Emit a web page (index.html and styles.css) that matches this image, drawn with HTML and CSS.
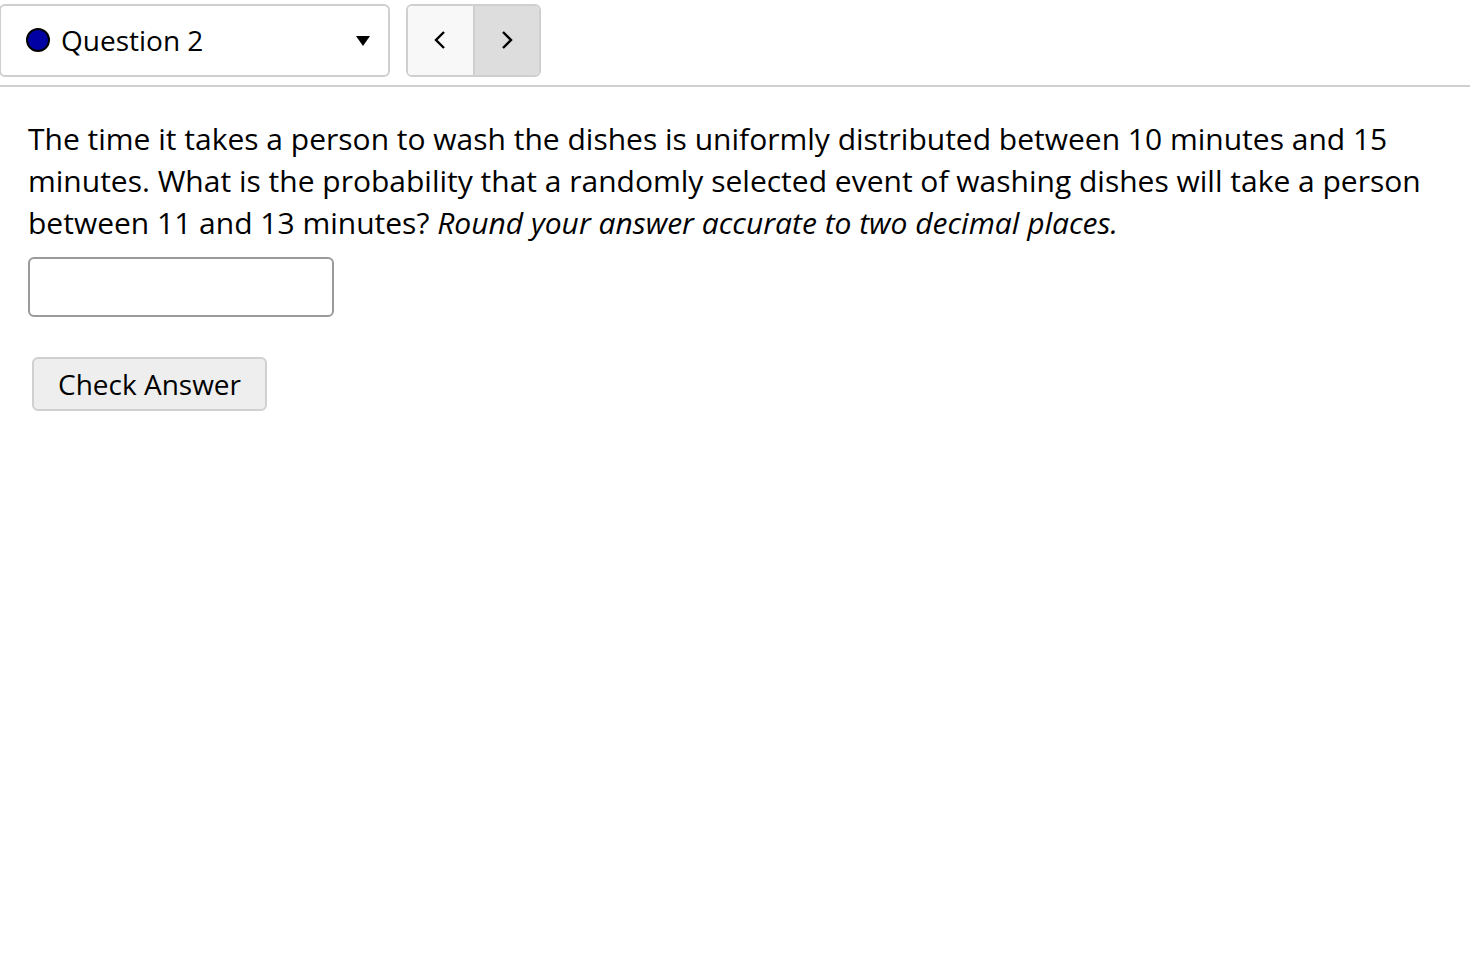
FILE: index.html
```html
<!DOCTYPE html>
<html>
<head>
<meta charset="utf-8">
<link rel="stylesheet" href="styles.css">
</head>
<body>
<div class="topbar">
  <div class="qselect">
    <span class="dot"></span>
    <span class="qlabel">Question 2</span>
    <svg class="caret" width="14" height="10" viewBox="0 0 14 10"><path d="M0 0 H14 L7 10 Z" fill="#000"/></svg>
  </div>
  <div class="nav">
    <div class="navbtn prev">
      <svg width="14" height="20" viewBox="0 0 14 20"><path d="M11 2 L3 10 L11 18" fill="none" stroke="#000" stroke-width="2.4"/></svg>
    </div>
    <div class="navbtn next">
      <svg width="14" height="20" viewBox="0 0 14 20"><path d="M3 2 L11 10 L3 18" fill="none" stroke="#000" stroke-width="2.4"/></svg>
    </div>
  </div>
</div>
<div class="content">
  <p class="question">The time it takes a person to wash the dishes is uniformly distributed between 10 minutes and 15 minutes. What is the probability that a randomly selected event of washing dishes will take a person between 11 and 13 minutes? <em>Round your answer accurate to two decimal places.</em></p>
  <input class="answer" type="text">
  <div class="actions"><button class="check">Check Answer</button></div>
</div>
</body>
</html>
```
FILE: styles.css
```css
html, body {
  margin: 0;
  padding: 0;
  background: #fff;
  font-family: "Open Sans", "DejaVu Sans", sans-serif;
  color: #000;
}
.topbar {
  display: flex;
  align-items: center;
  gap: 16px;
  padding: 4px 0 9px 0;
  border-bottom: 2px solid #d0d0d0;
  height: 72px;
}
.qselect {
  box-sizing: border-box;
  width: 391px;
  height: 73px;
  margin-left: -1px;
  border: 2px solid #cfcfcf;
  border-radius: 6px;
  display: flex;
  align-items: center;
  padding-left: 25px;
  padding-right: 18px;
}
.dot {
  width: 20px;
  height: 20px;
  border-radius: 50%;
  background: #0000a3;
  border: 2px solid #000;
  flex: none;
}
.qlabel {
  font-size: 28px;
  margin-left: 11px;
  flex: 1;
  line-height: 1;
}
.caret { flex: none; margin-top: 2px; }
.nav {
  box-sizing: border-box;
  display: flex;
  height: 73px;
  width: 135px;
  border: 2px solid #cfcfcf;
  border-radius: 6px;
  overflow: hidden;
}
.navbtn {
  flex: 1;
  display: flex;
  align-items: center;
  justify-content: center;
}
.prev { background: #f8f8f8; border-right: 2px solid #cfcfcf; }
.next { background: #dddddd; }
.content {
  padding: 0 28px;
}
.question {
  font-size: 30px;
  line-height: 42px;
  margin: 31px 0 0 0;
}
.question em { font-style: italic; }
.answer {
  display: block;
  box-sizing: border-box;
  width: 306px;
  height: 60px;
  margin-top: 13px;
  border: 2px solid #9a9a9a;
  border-radius: 6px;
  font-family: inherit;
  font-size: 28px;
  padding: 0 10px;
  outline: none;
}
.actions { margin-top: 40px; padding-left: 4px; }
.check {
  box-sizing: border-box;
  height: 54px;
  padding: 0 24px;
  font-family: "Open Sans", sans-serif;
  font-size: 28px;
  color: #000;
  background: #eeeeee;
  border: 2px solid #d0d0d0;
  border-radius: 6px;
}
```
